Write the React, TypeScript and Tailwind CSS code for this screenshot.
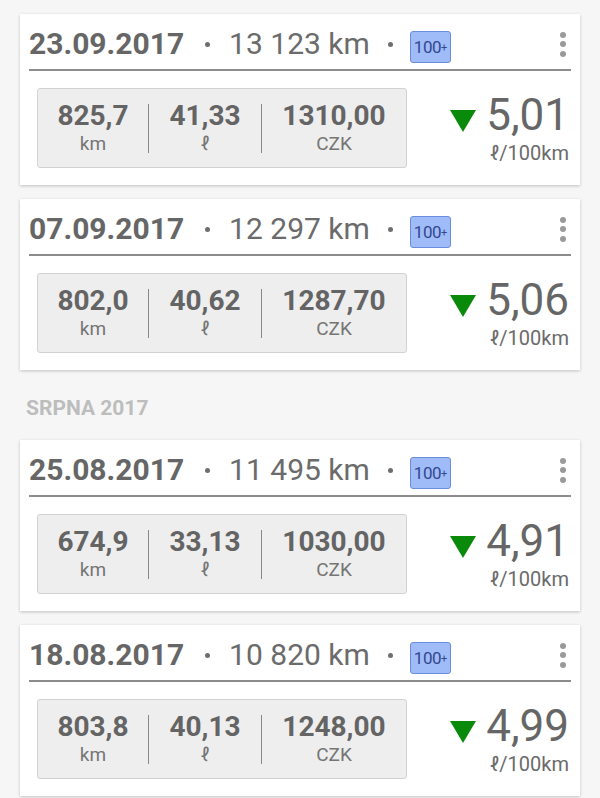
const entries = [
  { date: '23.09.2017', odo: '13 123 km', dist: '825,7', fuel: '41,33', price: '1310,00', cons: '5,01' },
  { date: '07.09.2017', odo: '12 297 km', dist: '802,0', fuel: '40,62', price: '1287,70', cons: '5,06' },
  { section: 'SRPNA 2017' },
  { date: '25.08.2017', odo: '11 495 km', dist: '674,9', fuel: '33,13', price: '1030,00', cons: '4,91' },
  { date: '18.08.2017', odo: '10 820 km', dist: '803,8', fuel: '40,13', price: '1248,00', cons: '4,99' },
];

type Entry = { date: string; odo: string; dist: string; fuel: string; price: string; cons: string };

function Sep({ right }: { right?: boolean }) {
  return <span className={`${right ? 'ml-[18px] mr-[17px]' : 'ml-[21px] mr-[19px]'} w-[5px] h-[5px] rounded-full bg-[#6e6e6e] shrink-0`} />;
}

function Stat({ value, unit, width }: { value: string; unit: string; width: string }) {
  return (
    <div className={`${width} flex flex-col items-center`}>
      <span className="text-[28px] leading-[28px] font-bold text-[#646464]">{value}</span>
      <span className="mt-[4px] text-[19px] leading-[20px] text-[#757575]">{unit}</span>
    </div>
  );
}

function Card({ e }: { e: Entry }) {
  return (
    <div className="mx-[20px] bg-white shadow-[0_1px_3px_rgba(0,0,0,0.22)] px-[9px] pt-[12px] pb-[17px]">
      <div className="h-[45px] flex items-center border-b-2 border-[#8c8c8c] pb-[7px]">
        <span className="text-[30px] leading-[36px] font-bold text-[#666666]">{e.date}</span>
        <Sep />
        <span className="text-[30px] leading-[36px] text-[#6b6b6b]">{e.odo}</span>
        <Sep right />
        <span className="translate-y-[3px] w-[41px] h-[32px] rounded-[3px] bg-[#9fbcf8] border border-[#6a8ddf] flex items-center justify-center text-[#34478f] tracking-[-0.5px]">
          <span className="text-[17px] leading-none">100</span>
          <span className="text-[11px] leading-none">+</span>
        </span>
        <div className="ml-auto mr-[5px] flex flex-col gap-[3.5px]">
          <span className="w-[6px] h-[6px] rounded-full bg-[#9a9a9a]" />
          <span className="w-[6px] h-[6px] rounded-full bg-[#9a9a9a]" />
          <span className="w-[6px] h-[6px] rounded-full bg-[#9a9a9a]" />
        </div>
      </div>
      <div className="mt-[17px] flex items-center">
        <div className="ml-[8px] w-[370px] h-[80px] bg-[#eeeeee] border border-[#d2d2d2] rounded-[3px] flex items-center">
          <Stat value={e.dist} unit="km" width="w-[110px]" />
          <div className="w-px h-[49px] bg-[#888888]" />
          <Stat value={e.fuel} unit="ℓ" width="w-[112px]" />
          <div className="w-px h-[49px] bg-[#888888]" />
          <Stat value={e.price} unit="CZK" width="flex-1" />
        </div>
        <div className="ml-auto mr-[2px] flex flex-col items-end">
          <div className="flex items-end">
            <svg width="26" height="22" viewBox="0 0 26 22" className="mb-[5px] mr-[10px]">
              <path d="M0 0 H26 L13 22 Z" fill="#0a8a0a" />
            </svg>
            <span className="text-[44px] leading-[44px] text-[#666666]">{e.cons}</span>
          </div>
          <span className="mt-[6px] text-[20px] leading-[20px] text-[#6b6b6b]">ℓ/100km</span>
        </div>
      </div>
    </div>
  );
}

export default function App() {
  return (
    <div className="w-[600px] h-[798px] overflow-hidden bg-[#f6f6f6] pt-[14px] font-['Roboto',sans-serif]">
      <div className="flex flex-col gap-[14px]">
        {entries.map((e, i) =>
          'section' in e ? (
            <div key={i} className="-my-[14px] pt-[26px] pb-[20px] px-[26px] text-[21px] leading-[24px] font-bold text-[#bdbdbd]">
              {e.section}
            </div>
          ) : (
            <Card key={i} e={e as Entry} />
          )
        )}
      </div>
    </div>
  );
}
